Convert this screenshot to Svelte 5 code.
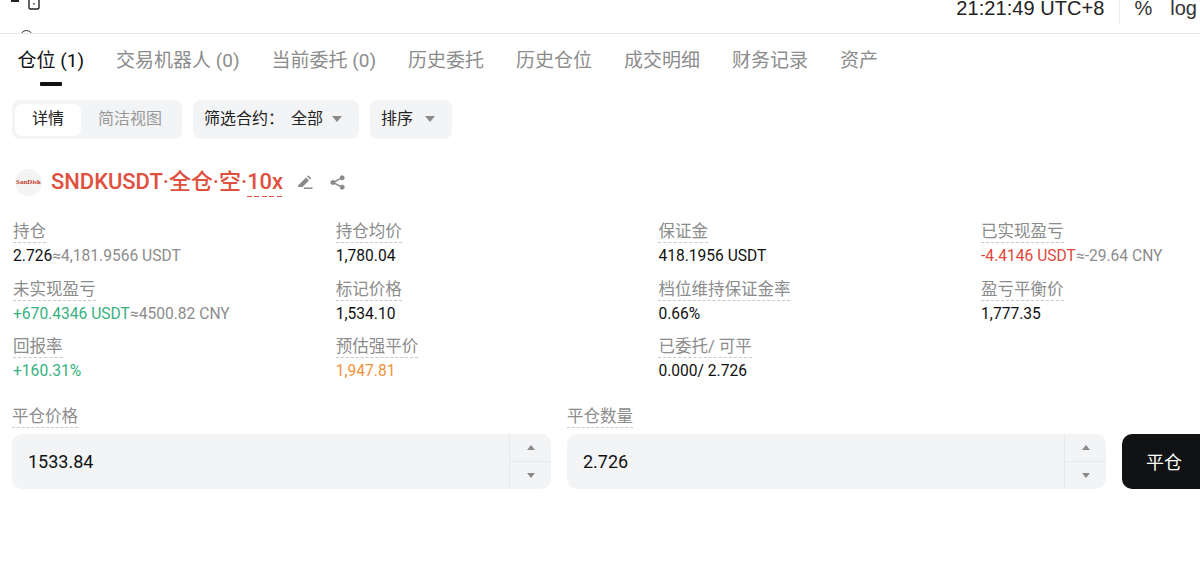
<script lang="ts">
    const tabs = [
        "仓位 (1)",
        "交易机器人 (0)",
        "当前委托 (0)",
        "历史委托",
        "历史仓位",
        "成交明细",
        "财务记录",
        "资产"
    ];

    const stats = [
        { label: "持仓", parts: [{ t: "2.726", c: "" }, { t: "≈4,181.9566 USDT", c: "muted" }] },
        { label: "持仓均价", parts: [{ t: "1,780.04", c: "" }] },
        { label: "保证金", parts: [{ t: "418.1956 USDT", c: "" }] },
        { label: "已实现盈亏", parts: [{ t: "-4.4146 USDT", c: "red" }, { t: "≈-29.64 CNY", c: "muted" }] },
        { label: "未实现盈亏", parts: [{ t: "+670.4346 USDT", c: "green" }, { t: "≈4500.82 CNY", c: "muted" }] },
        { label: "标记价格", parts: [{ t: "1,534.10", c: "" }] },
        { label: "档位维持保证金率", parts: [{ t: "0.66%", c: "" }] },
        { label: "盈亏平衡价", parts: [{ t: "1,777.35", c: "" }] },
        { label: "回报率", parts: [{ t: "+160.31%", c: "green" }] },
        { label: "预估强平价", parts: [{ t: "1,947.81", c: "orange" }] },
        { label: "已委托/ 可平", parts: [{ t: "0.000/ 2.726", c: "" }] }
    ];

    let closePrice = $state("1533.84");
    let closeQty = $state("2.726");
</script>

<div class="page">
    <header class="topbar">
        <div class="clipped-icons">
            <span class="dash"></span>
            <svg class="lock" width="14" height="12" viewBox="0 0 14 12" fill="none" stroke="#222" stroke-width="1.4">
                <path d="M2 0v7.500a1.500 1.500 0 0 0 1.500 1.500h7a1.500 1.500 0 0 0 1.500-1.500V0" />
                <path d="M7 3v1.500" />
            </svg>
            <span class="arc"></span>
        </div>
        <div class="clock">21:21:49 UTC+8</div>
        <div class="sep"></div>
        <div class="pct">%</div>
        <div class="log">log</div>
    </header>

    <nav class="tabs">
        {#each tabs as tab, i}
            <div class="tab" class:active={i === 0}>{tab}</div>
        {/each}
    </nav>

    <div class="toolbar">
        <div class="segment">
            <div class="seg on">详情</div>
            <div class="seg">简洁视图</div>
        </div>
        <div class="pill filter">
            <span>筛选合约：</span><span class="all">全部</span><i class="caret"></i>
        </div>
        <div class="pill sort">
            <span>排序</span><i class="caret"></i>
        </div>
    </div>

    <div class="symbol">
        <div class="logo"><span>SanDisk</span></div>
        <div class="title">SNDKUSDT·全仓·空·<span class="lev">10x</span></div>
        <svg class="edit" width="16" height="16" viewBox="0 0 16 16" fill="#8a8a8a">
            <path d="M1 11.500 9 3.500l3 3-6.500 6.500H1z" />
            <path d="M10 2.500l1.200-1.200 3 3L13 5.500z" />
            <rect x="7" y="13.500" width="8.500" height="1.500" />
        </svg>
        <svg class="share" width="15" height="15" viewBox="0 0 15 15" fill="#8a8a8a" stroke="#8a8a8a">
            <circle cx="2.800" cy="7.500" r="2" />
            <circle cx="12.200" cy="2.800" r="2" />
            <circle cx="12.200" cy="12.200" r="2" />
            <path d="M2.800 7.500 12.200 2.800M2.800 7.500l9.400 4.700" stroke-width="1.400" fill="none" />
        </svg>
    </div>

    <div class="stats">
        {#each stats as s}
            <div class="stat">
                <div class="label"><span>{s.label}</span></div>
                <div class="value">
                    {#each s.parts as p}<span class={p.c}>{p.t}</span>{/each}
                </div>
            </div>
        {/each}
    </div>

    <div class="form">
        <div class="field">
            <div class="label"><span>平仓价格</span></div>
            <div class="input-box">
                <input bind:value={closePrice} />
                <div class="stepper">
                    <div class="step"><i class="caret up"></i></div>
                    <div class="step"><i class="caret"></i></div>
                </div>
            </div>
        </div>
        <div class="field">
            <div class="label"><span>平仓数量</span></div>
            <div class="input-box">
                <input bind:value={closeQty} />
                <div class="stepper">
                    <div class="step"><i class="caret up"></i></div>
                    <div class="step"><i class="caret"></i></div>
                </div>
            </div>
        </div>
        <button type="button" class="close-btn">平仓</button>
    </div>
</div>

<style>
    :global(body) {
        margin: 0;
        background: #fff;
        overflow: hidden;
    }

    .page {
        width: 1200px;
        height: 578px;
        overflow: hidden;
        color: #111;
        font-family: Roboto, "Noto Sans CJK SC", sans-serif;
    }

    .topbar {
        position: relative;
        height: 33px;
        border-bottom: 1px solid #e9e9e9;
        display: flex;
        align-items: flex-start;
        justify-content: flex-end;
        overflow: hidden;
        box-sizing: content-box;
    }

    .clipped-icons {
        position: absolute;
        inset: 0;
    }

    .dash {
        position: absolute;
        left: 11px;
        top: 0;
        width: 8px;
        height: 2px;
        background: #222;
    }

    .lock {
        position: absolute;
        left: 27px;
        top: 0;
    }

    .arc {
        position: absolute;
        left: 20px;
        top: 30px;
        width: 11px;
        height: 11px;
        border: 1.500px solid #333;
        border-radius: 50%;
    }

    .clock {
        font-family: "Liberation Sans", sans-serif;
        font-size: 20px;
        line-height: 16px;
        letter-spacing: 0.06px;
        color: #222;
        margin-right: 14px;
    }

    .sep {
        width: 1px;
        height: 24px;
        background: #ececec;
    }

    .pct {
        font-family: "Liberation Sans", sans-serif;
        font-size: 20px;
        line-height: 16px;
        color: #333;
        margin-left: 15px;
    }

    .log {
        font-family: "Liberation Sans", sans-serif;
        font-size: 20px;
        line-height: 16px;
        color: #333;
        margin-left: 18px;
        margin-right: 3px;
    }

    .tabs {
        display: flex;
        gap: 32px;
        padding: 14px 0 0 17.500px;
        height: 54px;
        box-sizing: border-box;
    }

    .tab {
        position: relative;
        font-size: 19px;
        line-height: 26px;
        color: #8c8c8c;
        white-space: nowrap;
    }

    .tab.active {
        color: #111;
    }

    .tab.active::after {
        content: "";
        position: absolute;
        left: 50%;
        bottom: 2px;
        width: 22px;
        height: 4px;
        margin-left: -11px;
        border-radius: 1px;
        background: #111;
    }

    .toolbar {
        display: flex;
        gap: 11px;
        margin: 12px 0 0 12px;
        height: 39px;
    }

    .segment {
        display: flex;
        align-items: center;
        width: 170px;
        padding: 3px;
        box-sizing: border-box;
        border-radius: 8px;
        background: #f3f4f6;
    }

    .seg {
        height: 32px;
        line-height: 30px;
        font-size: 16px;
        color: #999;
        padding: 0 17px;
    }

    .seg.on {
        background: #fff;
        color: #222;
        border-radius: 7px;
    }

    .pill {
        display: flex;
        align-items: center;
        padding: 0 11px 2px;
        font-size: 16px;
        line-height: 20px;
        color: #222;
        border-radius: 8px;
        background: #f3f4f6;
        box-sizing: border-box;
    }

    .filter {
        width: 166px;
    }

    .sort {
        width: 82px;
    }

    .all {
        margin-left: 7px;
    }

    .filter .caret {
        margin-left: 9px;
    }

    .sort .caret {
        margin-left: 12px;
    }

    .pill .caret {
        border-left-width: 5px;
        border-right-width: 5px;
        border-top-width: 6px;
    }

    .caret {
        display: inline-block;
        width: 0;
        height: 0;
        border-left: 4.500px solid transparent;
        border-right: 4.500px solid transparent;
        border-top: 5px solid #8a8a8a;
    }

    .caret.up {
        border-top: 0;
        border-bottom: 5px solid #8a8a8a;
    }

    .symbol {
        display: flex;
        align-items: center;
        margin: 29px 0 0 15px;
        height: 28px;
    }

    .logo {
        width: 27px;
        height: 27px;
        border-radius: 50%;
        background: #f4f4f4;
        display: flex;
        align-items: center;
        justify-content: center;
    }

    .logo span {
        font-family: "Liberation Serif", serif;
        font-size: 7px;
        font-weight: 700;
        color: #c0392b;
        white-space: nowrap;
    }

    .title {
        margin-left: 9px;
        font-size: 22px;
        font-weight: 500;
        line-height: 28px;
        letter-spacing: -0.05px;
        color: #e0503f;
        white-space: nowrap;
    }

    .lev {
        position: relative;
    }

    .lev::after {
        content: "";
        position: absolute;
        left: 0;
        right: 0;
        bottom: -3px;
        height: 1.500px;
        background: repeating-linear-gradient(90deg, #e0503f 0 5px, transparent 5px 7.500px);
    }

    .edit {
        margin-left: 14px;
    }

    .share {
        margin-left: 17px;
    }

    .stats {
        display: grid;
        grid-template-columns: repeat(4, 322.700px);
        grid-auto-rows: 57.500px;
        margin: 24px 0 0 13px;
    }

    .label {
        font-size: 16.500px;
        line-height: 24px;
        color: #8c8c8c;
    }

    .label span {
        border-bottom: 1px dashed #c9c9c9;
        padding-bottom: 1px;
    }

    .value {
        font-size: 15.600px;
        line-height: 22px;
        margin-top: 1px;
        color: #111;
        white-space: nowrap;
    }

    .muted {
        color: #8c8c8c;
    }

    .red {
        color: #e0473a;
    }

    .green {
        color: #35b27f;
    }

    .orange {
        color: #f0913a;
    }

    .form {
        display: flex;
        align-items: flex-end;
        margin: 12px 0 0 12px;
        gap: 16px;
    }

    .field {
        flex: none;
        width: 539px;
    }

    .field .label {
        margin-bottom: 5px;
    }

    .input-box {
        display: flex;
        height: 55px;
        border-radius: 10px;
        background: #f3f4f6;
        overflow: hidden;
    }

    .input-box input {
        flex: 1;
        min-width: 0;
        border: none;
        outline: none;
        background: transparent;
        padding: 0 16px;
        font-family: inherit;
        font-size: 18px;
        color: #111;
    }

    .stepper {
        width: 41px;
        display: flex;
        flex-direction: column;
        border-left: 1px solid #e7e8ea;
    }

    .step {
        flex: 1;
        display: flex;
        align-items: center;
        justify-content: center;
    }

    .step + .step {
        border-top: 1px solid #e7e8ea;
    }

    .close-btn {
        flex: none;
        width: 90px;
        height: 55px;
        border: none;
        border-radius: 10px;
        background: #111214;
        color: #fff;
        font-family: inherit;
        font-size: 18px;
        text-align: left;
        padding: 0 0 0 24px;
    }
</style>
